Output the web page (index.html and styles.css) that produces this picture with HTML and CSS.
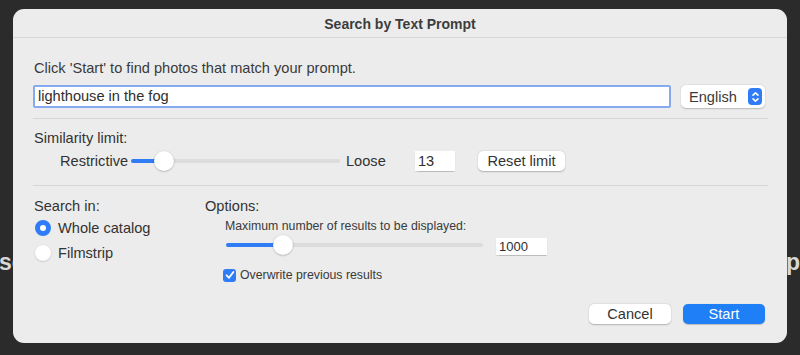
FILE: index.html
```html
<!DOCTYPE html>
<html>
<head>
<meta charset="utf-8">
<link rel="stylesheet" href="styles.css">
</head>
<body>
<div class="backdrop">
  <span class="bg-left">sc</span>
  <span class="bg-right">up</span>
</div>
<div class="dialog">
  <div class="titlebar">Search by Text Prompt</div>
  <div class="content">
    <div class="prompt-label">Click 'Start' to find photos that match your prompt.</div>
    <div class="prompt-row">
      <div class="text-input">lighthouse in the fog</div>
      <div class="popup">
        <span>English</span>
        <span class="stepper">
          <svg width="13" height="16" viewBox="0 0 13 16"><path d="M4 6.2 L6.5 3.8 L9 6.2 M4 9.8 L6.5 12.2 L9 9.8" fill="none" stroke="#fff" stroke-width="1.6" stroke-linecap="round" stroke-linejoin="round"/></svg>
        </span>
      </div>
    </div>
    <div class="sep sep1"></div>
    <div class="sim-label">Similarity limit:</div>
    <div class="sim-row">
      <span class="sim-left">Restrictive</span>
      <div class="slider sim-slider">
        <div class="track"></div>
        <div class="fill" style="width: 30px"></div>
        <div class="knob" style="left: 23px"></div>
      </div>
      <span class="sim-right">Loose</span>
      <div class="num-field sim-field">13</div>
      <div class="btn reset-btn">Reset limit</div>
    </div>
    <div class="sep sep2"></div>
    <div class="lower">
      <div class="col-search">
        <div class="sec-label">Search in:</div>
        <div class="radio-row first">
          <span class="radio on"></span><span>Whole catalog</span>
        </div>
        <div class="radio-row">
          <span class="radio"></span><span>Filmstrip</span>
        </div>
      </div>
      <div class="col-options">
        <div class="sec-label">Options:</div>
        <div class="opt-body">
          <div class="max-label">Maximum number of results to be displayed:</div>
          <div class="max-row">
            <div class="slider max-slider">
              <div class="track"></div>
              <div class="fill" style="width: 50px"></div>
              <div class="knob" style="left: 47px"></div>
            </div>
            <div class="num-field max-field">1000</div>
          </div>
          <div class="check-row">
            <span class="checkbox">
              <svg width="12" height="12" viewBox="0 0 12 12"><path d="M2.6 6.3 L5 8.8 L9.4 3" fill="none" stroke="#fff" stroke-width="1.8" stroke-linecap="round" stroke-linejoin="round"/></svg>
            </span>
            <span>Overwrite previous results</span>
          </div>
        </div>
      </div>
    </div>
    <div class="buttons">
      <div class="btn cancel">Cancel</div>
      <div class="btn start">Start</div>
    </div>
  </div>
</div>
</body>
</html>
```
FILE: styles.css
```css
* { box-sizing: border-box; }
html, body {
  margin: 0;
  padding: 0;
  width: 800px;
  height: 355px;
  overflow: hidden;
  background: #2b2b2b;
  font-family: "Liberation Sans", "Helvetica", Arial, sans-serif;
  color: #333;
}
.backdrop {
  display: flex;
  justify-content: space-between;
  padding-top: 249px;
  margin-left: -1px;
  margin-right: 0;
  font-size: 23px;
  color: #d8d8d8;
  font-weight: bold;
}
.dialog {
  position: absolute;
  left: 13px;
  top: 9px;
  width: 774px;
  height: 334px;
  background: #ececec;
  border-radius: 11px;
  overflow: hidden;
}
.titlebar {
  height: 29px;
  border-bottom: 1px solid #d8d8d8;
  display: flex;
  align-items: center;
  justify-content: center;
  font-weight: bold;
  font-size: 14px;
  color: #3c3c3c;
  padding-top: 1px;
}
.content {
  padding: 0 19px 0 20px;
}
.prompt-label {
  font-size: 14.6px;
  margin-top: 22px;
  margin-left: 1px;
  line-height: 16px;
  color: #3a3a3a;
}
.prompt-row {
  display: flex;
  align-items: center;
  margin-top: 9px;
}
.text-input {
  width: 638px;
  height: 23px;
  background: #fff;
  border: 2px solid #86aaf0;
  border-radius: 2px;
  font-size: 14.6px;
  line-height: 19px;
  padding-left: 3px;
  color: #2e2e2e;
}
.popup {
  margin-left: 10px;
  width: 84px;
  height: 23px;
  background: #fff;
  border-radius: 5px;
  box-shadow: 0 0.5px 1.5px rgba(0,0,0,0.22);
  display: flex;
  align-items: center;
  justify-content: space-between;
  padding: 0 3px 0 8px;
  font-size: 14.6px;
  color: #3a3a3a;
}
.stepper {
  width: 14px;
  height: 17px;
  background: #2f7cf6;
  border-radius: 4px;
  display: flex;
  align-items: center;
  justify-content: center;
}
.sep {
  height: 1px;
  background: #d6d6d6;
}
.sep1 { margin-top: 10px; }
.sim-label {
  font-size: 14.6px;
  line-height: 16px;
  margin-top: 11px;
  margin-left: 1px;
}
.sim-row {
  display: flex;
  align-items: center;
  margin-top: 4px;
  height: 22px;
  font-size: 14.6px;
}
.sim-left {
  margin-left: 27px;
  width: 71px;
}
.slider {
  position: relative;
  height: 22px;
}
.track {
  position: absolute;
  left: 0;
  right: 0;
  top: 9px;
  height: 4px;
  background: #dcdcdc;
  border-radius: 2px;
}
.fill {
  position: absolute;
  left: 0;
  top: 9px;
  height: 4px;
  background: #2f7cf6;
  border-radius: 2px;
}
.knob {
  position: absolute;
  top: 1px;
  width: 20px;
  height: 20px;
  border-radius: 50%;
  background: #fff;
  box-shadow: 0 0.5px 2px rgba(0,0,0,0.3);
}
.sim-slider {
  width: 209px;
}
.sim-right {
  margin-left: 6px;
  width: 40px;
}
.num-field {
  background: #fff;
  box-shadow: 0 0.5px 1px rgba(0,0,0,0.2);
  font-size: 14.6px;
  padding-left: 3px;
  color: #2e2e2e;
}
.sim-field {
  margin-left: 29px;
  width: 40px;
  height: 20px;
  line-height: 20px;
}
.btn {
  display: flex;
  align-items: center;
  justify-content: center;
  font-size: 14.6px;
  border-radius: 5px;
  background: #fff;
  box-shadow: 0 0.5px 1.5px rgba(0,0,0,0.25);
  color: #333;
}
.reset-btn {
  margin-left: 23px;
  width: 87px;
  height: 20px;
}
.sep2 { margin-top: 13px; }
.lower {
  display: flex;
  margin-top: 12px;
}
.sec-label {
  font-size: 14.6px;
  line-height: 16px;
  margin-left: 1px;
}
.col-search {
  width: 171px;
}
.radio-row {
  display: flex;
  align-items: center;
  font-size: 14.6px;
  height: 20px;
  margin-top: 5px;
}
.radio-row.first { margin-top: 4px; }
.radio {
  width: 16px;
  height: 16px;
  border-radius: 50%;
  background: #fff;
  box-shadow: 0 0.5px 1.5px rgba(0,0,0,0.25);
  margin-left: 2px;
  margin-right: 7px;
}
.radio.on {
  background: #fff;
  border: 5px solid #2f7cf6;
  box-shadow: none;
}
.col-options {
  flex: 1;
}
.opt-body {
  padding-left: 21px;
}
.max-label {
  font-size: 12.3px;
  line-height: 14px;
  margin-top: 5px;
  color: #3a3a3a;
}
.max-row {
  display: flex;
  align-items: center;
  margin-top: 1px;
}
.max-slider {
  width: 257px;
  margin-left: 1px;
}
.max-field {
  margin-left: 13px;
  width: 51px;
  height: 17px;
  line-height: 17px;
  font-size: 13px;
  margin-top: 2px;
}
.check-row {
  display: flex;
  align-items: center;
  margin-top: 12px;
  font-size: 12.3px;
  color: #3a3a3a;
  height: 14px;
}
.checkbox {
  width: 13px;
  height: 13px;
  border-radius: 3px;
  background: #2f7cf6;
  display: flex;
  align-items: center;
  justify-content: center;
  margin-left: -2px;
  margin-right: 4px;
}
.buttons {
  display: flex;
  justify-content: flex-end;
  gap: 12px;
  margin-top: 22px;
  margin-right: 3px;
}
.buttons .btn {
  width: 82px;
  height: 20px;
}
.start {
  background: #1f7ff6;
  color: #fff;
  box-shadow: 0 0.5px 1px rgba(0,0,0,0.2);
}
```
